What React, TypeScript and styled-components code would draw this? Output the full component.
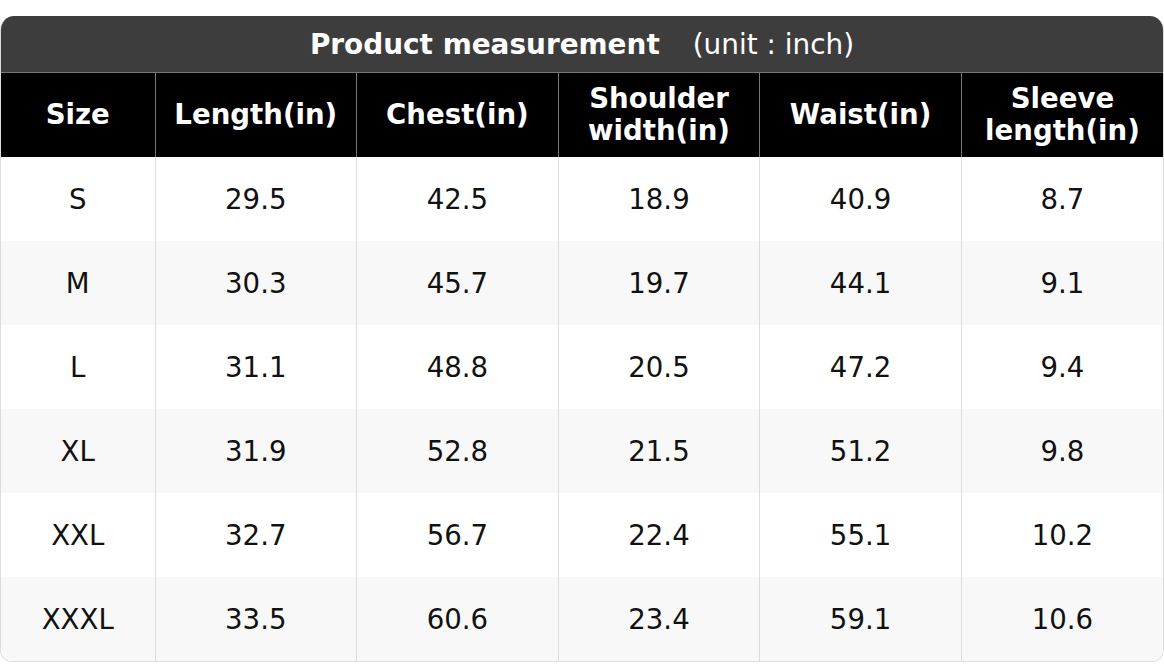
import React from 'react';
import styled, { createGlobalStyle } from 'styled-components';

const GlobalStyle = createGlobalStyle`
  html, body {
    margin: 0;
    padding: 0;
    background: #ffffff;
    font-family: "DejaVu Sans", "Liberation Sans", sans-serif;
  }
`;

const Page = styled.div`
  padding-top: 16px;
  width: 1164px;
`;

const Card = styled.div`
  border: 1px solid #dddddd;
  border-top: 0;
  border-radius: 14px 14px 12px 12px;
  overflow: hidden;
`;

const TitleBar = styled.div`
  height: 56px;
  background: #3d3d3d;
  border-bottom: 1px solid #777777;
  display: flex;
  align-items: center;
  justify-content: center;
  color: #ffffff;
  font-size: 27.9px;
`;

const TitleMain = styled.span`
  font-weight: bold;
`;

const TitleUnit = styled.span`
  margin-left: 33px;
`;

const Table = styled.table`
  width: 100%;
  border-collapse: collapse;
  table-layout: fixed;
  font-size: 27.6px;
`;

const HeadCell = styled.th<{ $first?: boolean }>`
  height: 84px;
  padding: 0 2px;
  background: #000000;
  color: #ffffff;
  font-weight: bold;
  line-height: 32px;
  text-align: center;
  border-left: ${({ $first }) => ($first ? '0' : '1px solid #777777')};
`;

const Row = styled.tr<{ $alt: boolean }>`
  background: ${({ $alt }) => ($alt ? '#f8f8f8' : '#ffffff')};
`;

const Cell = styled.td<{ $first?: boolean }>`
  height: 84px;
  padding: 0;
  color: #111111;
  text-align: center;
  border-left: ${({ $first }) => ($first ? '0' : '1px solid #dddddd')};
`;

const columns = ['Size', 'Length(in)', 'Chest(in)', 'Shoulder width(in)', 'Waist(in)', 'Sleeve length(in)'];

const rows = [
  ['S', '29.5', '42.5', '18.9', '40.9', '8.7'],
  ['M', '30.3', '45.7', '19.7', '44.1', '9.1'],
  ['L', '31.1', '48.8', '20.5', '47.2', '9.4'],
  ['XL', '31.9', '52.8', '21.5', '51.2', '9.8'],
  ['XXL', '32.7', '56.7', '22.4', '55.1', '10.2'],
  ['XXXL', '33.5', '60.6', '23.4', '59.1', '10.6'],
];

const App = () => {
  return (
    <Page>
      <GlobalStyle />
      <Card>
        <TitleBar>
          <TitleMain>Product measurement</TitleMain>
          <TitleUnit>(unit : inch)</TitleUnit>
        </TitleBar>
        <Table>
          <colgroup>
            <col style={{ width: 154 }} />
            <col />
            <col />
            <col />
            <col />
            <col />
          </colgroup>
          <thead>
            <tr>
              {columns.map((c, i) => (
                <HeadCell key={c} $first={i === 0}>{c}</HeadCell>
              ))}
            </tr>
          </thead>
          <tbody>
            {rows.map((r, ri) => (
              <Row key={r[0]} $alt={ri % 2 === 1}>
                {r.map((v, ci) => (
                  <Cell key={ci} $first={ci === 0}>{v}</Cell>
                ))}
              </Row>
            ))}
          </tbody>
        </Table>
      </Card>
    </Page>
  );
};

export default App;
